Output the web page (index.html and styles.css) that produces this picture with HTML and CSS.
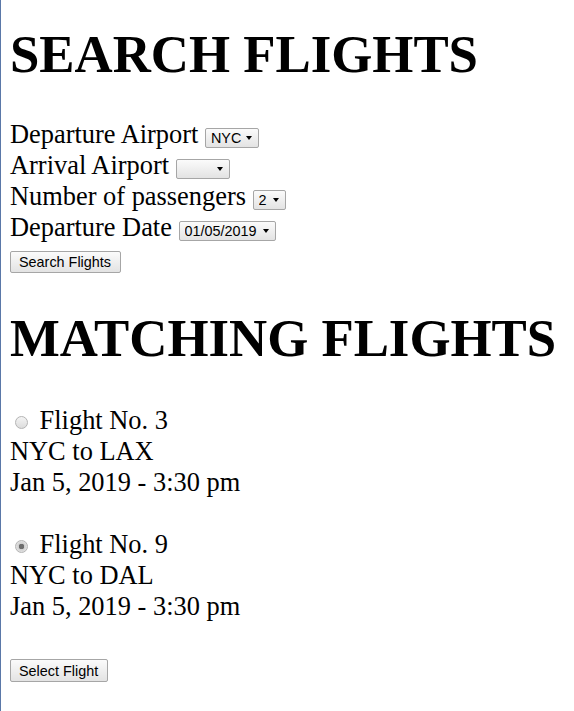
FILE: index.html
```html
<!DOCTYPE html>
<html>
<head>
<meta charset="utf-8">
<title>Search Flights</title>
<link rel="stylesheet" href="styles.css">
</head>
<body>
<div class="page">
  <h1 class="title title-first">SEARCH FLIGHTS</h1>
  <form class="search">
    <div class="row">Departure Airport <span class="sel-wrap"><select class="sel sel-airport"><option>NYC</option><option>LAX</option><option>DAL</option></select></span></div>
    <div class="row">Arrival Airport <span class="sel-wrap"><select class="sel sel-airport"><option></option><option>LAX</option><option>DAL</option></select></span></div>
    <div class="row">Number of passengers <span class="sel-wrap"><select class="sel sel-pax"><option>1</option><option selected>2</option><option>3</option></select></span></div>
    <div class="row">Departure Date <span class="sel-wrap"><select class="sel sel-date"><option>01/05/2019</option></select></span></div>
    <button type="button" class="btn btn-search">Search Flights</button>
  </form>
  <h1 class="title">MATCHING FLIGHTS</h1>
  <form class="results">
    <div class="flight">
      <div class="line"><input type="radio" name="flight" class="radio"> Flight No. 3</div>
      <div class="line">NYC to LAX</div>
      <div class="line">Jan 5, 2019 - 3:30 pm</div>
    </div>
    <div class="flight">
      <div class="line"><input type="radio" name="flight" class="radio" checked> Flight No. 9</div>
      <div class="line">NYC to DAL</div>
      <div class="line">Jan 5, 2019 - 3:30 pm</div>
    </div>
    <button type="button" class="btn btn-select">Select Flight</button>
  </form>
</div>
</body>
</html>
```

FILE: styles.css
```css
html, body {
  margin: 0;
  padding: 0;
  background: #fff;
}
.page {
  border-left: 1px solid #5a78a8;
  padding-left: 9px;
  min-height: 711px;
  box-sizing: border-box;
  font-family: "Liberation Serif", "Times New Roman", serif;
  font-size: 26.4px;
  line-height: 31px;
  color: #000;
  overflow: hidden;
}
.title {
  font-size: 52.8px;
  font-weight: bold;
  line-height: 60px;
  margin: 35.4px 0;
}
.title-first {
  margin-top: 24px;
}
.search, .results {
  margin: 0;
}
.results {
  padding-top: 1px;
}
.row {
  line-height: 31px;
}
.sel-wrap {
  position: relative;
  display: inline-block;
  line-height: 0;
}
.sel-wrap::after {
  content: "";
  position: absolute;
  right: 7px;
  top: 8px;
  border-left: 3.5px solid transparent;
  border-right: 3.5px solid transparent;
  border-top: 4.5px solid #000;
  pointer-events: none;
}
.sel {
  -webkit-appearance: none;
  appearance: none;
  box-sizing: border-box;
  height: 20px;
  margin: 0;
  padding: 0 0 0 5px;
  border: 1px solid #a6a6a6;
  border-radius: 2px;
  background: linear-gradient(#fbfbfb, #e3e3e3);
  font-family: "Liberation Sans", Arial, sans-serif;
  font-size: 14.4px;
  line-height: 18px;
  color: #000;
}
.sel-airport { width: 54px; }
.sel-pax { width: 33px; }
.sel-date { width: 97px; }
.btn {
  display: block;
  box-sizing: border-box;
  height: 22px;
  padding: 0 9px 0 8px;
  border: 1px solid #a6a6a6;
  border-radius: 2px;
  background: linear-gradient(#fbfbfb, #e3e3e3);
  font-family: "Liberation Sans", Arial, sans-serif;
  font-size: 14.4px;
  line-height: 20px;
  color: #000;
}
.btn-search {
  margin-top: 7.6px;
}
.flight + .flight {
  margin-top: 31px;
}
.btn-select {
  margin-top: 37.4px;
  height: 23px;
}
.radio {
  -webkit-appearance: none;
  appearance: none;
  box-sizing: border-box;
  width: 13px;
  height: 13px;
  margin: 3px 5px 0 5px;
  border: 1px solid #b4b4b4;
  border-radius: 50%;
  background: linear-gradient(#f4f4f4, #dcdcdc);
  vertical-align: baseline;
}
.radio:checked {
  background: radial-gradient(circle, #6d6d6d 0, #6d6d6d 2.6px, #cfcfcf 3px, #e6e6e6 6px);
}
```
